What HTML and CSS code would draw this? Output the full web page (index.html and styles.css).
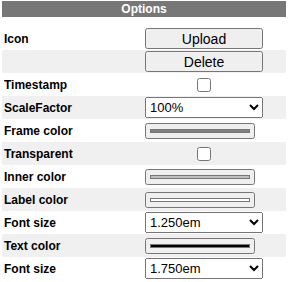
FILE: index.html
```html
<!DOCTYPE html>
<html>
<head>
  <title>Options</title>
  <link rel="stylesheet" href="styles.css">
</head>
<body>
  <div class="panel">
    <div class="title">Options</div>
    <div class="rows">
      <div class="row">
        <label>Icon</label>
        <button>Upload</button>
      </div>
      <div class="row">
        <label></label>
        <button>Delete</button>
      </div>
      <div class="row">
        <label>Timestamp</label>
        <input type="checkbox" class="check" />
      </div>
      <div class="row">
        <label>ScaleFactor</label>
        <select>
          <option>100%</option>
          <option>150%</option>
          <option>200%</option>
        </select>
      </div>
      <div class="row">
        <label>Frame color</label>
        <input type="color" value="#808080" />
      </div>
      <div class="row">
        <label>Transparent</label>
        <input type="checkbox" class="check" />
      </div>
      <div class="row">
        <label>Inner color</label>
        <input type="color" value="#c0c0c0" />
      </div>
      <div class="row">
        <label>Label color</label>
        <input type="color" value="#ffffff" />
      </div>
      <div class="row">
        <label>Font size</label>
        <select>
          <option>1.250em</option>
          <option>1.500em</option>
        </select>
      </div>
      <div class="row">
        <label>Text color</label>
        <input type="color" value="#000000" />
      </div>
      <div class="row">
        <label>Font size</label>
        <select>
          <option>1.750em</option>
          <option>2.000em</option>
        </select>
      </div>
    </div>
  </div>
</body>
</html>
```

FILE: styles.css
```css
body {
  margin: 1px 2px;
  font-family: "Liberation Sans", Arial, sans-serif;
  background: #fff;
}

.panel {
  width: 284px;
}

.title {
  height: 16px;
  line-height: 16px;
  background: #777;
  color: #fff;
  font-weight: bold;
  font-size: 12px;
  text-align: center;
}

.rows {
  margin-top: 10px;
}

.row {
  display: grid;
  grid-template-columns: 141px 118px;
  align-items: center;
  height: 23px;
  padding-left: 2px;
}

.row:nth-child(even) {
  background: #f0f0f0;
}

.row label {
  font-weight: bold;
  font-size: 12px;
  color: #000;
}

button, select {
  width: 118px;
  height: 21px;
  margin: 0;
  font-family: "Liberation Sans", Arial, sans-serif;
  font-size: 13px;
}

button {
  font-size: 14px;
}

.check {
  justify-self: center;
  width: 14px;
  height: 14px;
  margin: 0;
}

input[type="color"] {
  width: 110px;
  height: 16px;
  margin: 0;
}
```
